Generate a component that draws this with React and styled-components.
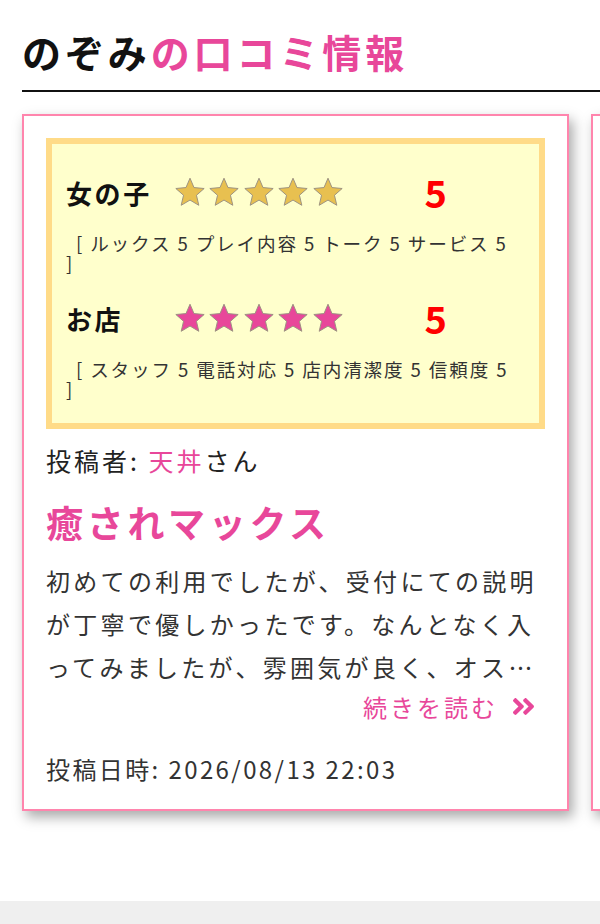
import React from 'react'
import styled, { createGlobalStyle } from 'styled-components'
import { FaAngleDoubleRight } from 'react-icons/fa'

const PINK = '#e8479a'

const reviews = [
  {
    girl: 5,
    girlDetail: '[ ルックス 5 プレイ内容 5 トーク 5 サービス 5 ]',
    shop: 5,
    shopDetail: '[ スタッフ 5 電話対応 5 店内清潔度 5 信頼度 5 ]',
    author: '天丼',
    title: '癒されマックス',
    body: '初めての利用でしたが、受付にての説明が丁寧で優しかったです。なんとなく入ってみましたが、雰囲気が良く、オススメです。また利用したいと思います。',
    date: '2026/08/13 22:03',
  },
  {
    girl: 5,
    girlDetail: '[ ルックス 5 プレイ内容 5 トーク 5 サービス 5 ]',
    shop: 5,
    shopDetail: '[ スタッフ 5 電話対応 5 店内清潔度 5 信頼度 5 ]',
    author: 'ゆう',
    title: 'また行きます',
    body: '二回目の利用です。今回もとても楽しい時間を過ごすことができました。スタッフの対応も良く、安心して利用できました。',
    date: '2026/08/02 19:40',
  },
]

export default function App() {
  return (
    <>
      <GlobalStyle />
      <Section>
        <Heading>
          のぞみ<Accent>の口コミ情報</Accent>
        </Heading>
        <Track>
          {reviews.map((r, i) => (
            <ReviewCard key={i} review={r} />
          ))}
        </Track>
      </Section>
    </>
  )
}

function ReviewCard({ review }) {
  return (
    <Card>
      <ScoreBox>
        <RatingRow>
          <RatingLabel>女の子</RatingLabel>
          <Stars count={review.girl} color="#e8c050" />
          <Score>{review.girl}</Score>
        </RatingRow>
        <Detail>{review.girlDetail}</Detail>
        <RatingRow>
          <RatingLabel>お店</RatingLabel>
          <Stars count={review.shop} color={PINK} />
          <Score>{review.shop}</Score>
        </RatingRow>
        <Detail last>{review.shopDetail}</Detail>
      </ScoreBox>
      <Author>
        投稿者: <AuthorName>{review.author}</AuthorName>さん
      </Author>
      <ReviewTitle>{review.title}</ReviewTitle>
      <Body>{review.body}</Body>
      <More>
        続きを読む
        <FaAngleDoubleRight size={27} />
      </More>
      <PostDate>投稿日時: {review.date}</PostDate>
    </Card>
  )
}

function Stars({ count, color }) {
  return (
    <StarList>
      {Array.from({ length: count }).map((_, i) => (
        <svg key={i} width="34" height="33" viewBox="0 0 24 24">
          <polygon
            points="12,1.6 14.9,8.4 22.3,9.1 16.7,14 18.4,21.3 12,17.5 5.6,21.3 7.3,14 1.7,9.1 9.1,8.4"
            fill={color}
            stroke="#9a9080"
            strokeWidth="0.7"
            strokeLinejoin="round"
          />
        </svg>
      ))}
    </StarList>
  )
}

const GlobalStyle = createGlobalStyle`
  body {
    margin: 0;
    background: #efefef;
    font-family: "Noto Sans CJK JP", "Noto Sans", sans-serif;
    color: #222;
  }
`

const Section = styled.section`
  background: #fff;
  padding: 25px 0 60px;
  box-shadow: 0 2px 4px rgba(0, 0, 0, 0.18);
  overflow: hidden;
`

const Heading = styled.h2`
  margin: 0 0 0 22px;
  font-size: 39px;
  line-height: 53px;
  font-weight: 700;
  letter-spacing: 0.1em;
  color: #111;
  padding-bottom: 12px;
  border-bottom: 2px solid #111;
  white-space: nowrap;
`

const Accent = styled.span`
  color: ${PINK};
`

const Track = styled.div`
  display: flex;
  gap: 22px;
  margin-top: 12px;
  padding: 10px 0 30px 22px;
  overflow: hidden;
`

const Card = styled.article`
  flex: 0 0 547px;
  box-sizing: border-box;
  background: #fff;
  border: 2px solid #ff85ad;
  padding: 22px;
  box-shadow: 4px 6px 12px rgba(0, 0, 0, 0.34);
`

const ScoreBox = styled.div`
  background: #ffffcc;
  border: 6px solid #ffdb88;
  padding: 28px 18px 24px 14px;
`

const RatingRow = styled.div`
  display: flex;
  align-items: center;
  height: 40px;
  margin-bottom: 21px;
`

const RatingLabel = styled.span`
  width: 107px;
  flex: none;
  font-size: 26px;
  font-weight: 700;
  letter-spacing: 0.1em;
  color: #111;
`

const StarList = styled.span`
  display: flex;
  gap: 0.4px;
`

const Score = styled.span`
  margin-left: 80px;
  font-size: 38px;
  font-weight: 700;
  line-height: 1;
  color: #ff0000;
`

const Detail = styled.p`
  margin: 0 0 ${(p) => (p.last ? '0' : '25px')};
  font-size: 18.6px;
  line-height: 20px;
  letter-spacing: 0.1em;
  text-indent: 10px;
  color: #333;
`

const Author = styled.div`
  margin-top: 13px;
  font-size: 25px;
  line-height: 36px;
  letter-spacing: 3px;
  color: #222;
`

const AuthorName = styled.span`
  color: ${PINK};
`

const ReviewTitle = styled.h3`
  margin: 19px 0 0;
  font-size: 37px;
  line-height: 50px;
  font-weight: 700;
  letter-spacing: 0.1em;
  color: ${PINK};
`

const Body = styled.p`
  margin: 12px 0 0;
  font-size: 24px;
  line-height: 43px;
  letter-spacing: 3.3px;
  color: #333;
  display: -webkit-box;
  -webkit-line-clamp: 3;
  -webkit-box-orient: vertical;
  overflow: hidden;
`

const More = styled.a`
  display: flex;
  align-items: center;
  justify-content: flex-end;
  gap: 12px;
  margin-right: 8px;
  height: 36px;
  font-size: 24px;
  letter-spacing: 3px;
  color: ${PINK};
  cursor: pointer;
`

const PostDate = styled.div`
  margin-top: 27px;
  font-size: 24px;
  line-height: 36px;
  letter-spacing: 0.1em;
  color: #333;
`
